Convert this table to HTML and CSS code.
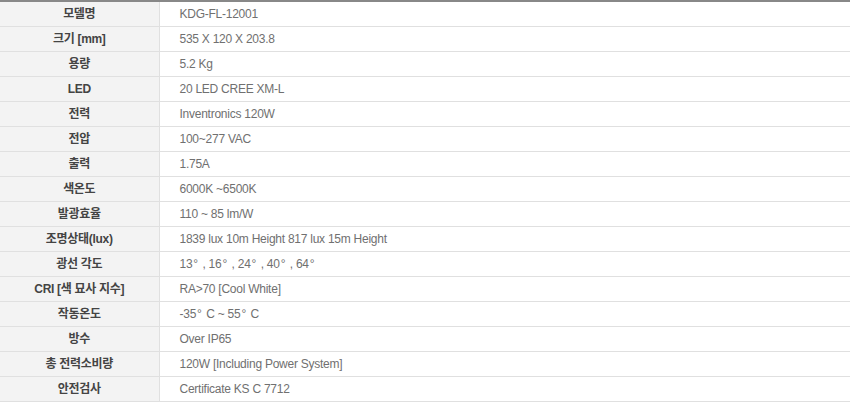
FILE: index.html
```html
<!DOCTYPE html>
<html lang="ko">
<head>
<meta charset="utf-8">
<link rel="stylesheet" href="styles.css">
</head>
<body>
<table class="spec">
<tbody>
<tr><th>모델명</th><td>KDG-FL-12001</td></tr>
<tr><th>크기 [mm]</th><td>535 X 120 X 203.8</td></tr>
<tr><th>용량</th><td>5.2 Kg</td></tr>
<tr><th>LED</th><td>20 LED CREE XM-L</td></tr>
<tr><th>전력</th><td>Inventronics 120W</td></tr>
<tr><th>전압</th><td>100~277 VAC</td></tr>
<tr><th>출력</th><td>1.75A</td></tr>
<tr><th>색온도</th><td>6000K ~6500K</td></tr>
<tr><th>발광효율</th><td>110 ~ 85 lm/W</td></tr>
<tr><th>조명상태(lux)</th><td>1839 lux 10m Height 817 lux 15m Height</td></tr>
<tr><th>광선 각도</th><td>13<span class="deg">°</span> , 16<span class="deg">°</span> , 24<span class="deg">°</span> , 40<span class="deg">°</span> , 64<span class="deg">°</span></td></tr>
<tr><th>CRI [색 묘사 지수]</th><td>RA&gt;70 [Cool White]</td></tr>
<tr><th>작동온도</th><td>-35<span class="deg">°</span> C ~ 55<span class="deg">°</span> C</td></tr>
<tr><th>방수</th><td>Over IP65</td></tr>
<tr><th>총 전력소비량</th><td>120W [Including Power System]</td></tr>
<tr><th>안전검사</th><td>Certificate KS C 7712</td></tr>
</tbody>
</table>
</body>
</html>
```
FILE: styles.css
```css
html, body {
  margin: 0;
  padding: 0;
  background: #fff;
}
.spec {
  width: 850px;
  border-collapse: collapse;
  border-top: 2px solid #888;
  font-family: "Liberation Sans", "Noto Sans CJK KR", sans-serif;
  font-size: 12px;
}
.spec th,
.spec td {
  height: 24px;
  padding: 0;
  border-bottom: 1px solid #e0e0e0;
  box-sizing: border-box;
  line-height: 24px;
}
.spec tr {
  height: 25px;
}
.spec th {
  width: 159px;
  background: #f3f3f3;
  border-right: 1px solid #e0e0e0;
  color: #444;
  font-weight: bold;
  letter-spacing: -0.3px;
  text-align: center;
}
.spec td {
  padding-left: 20px;
  color: #707070;
  letter-spacing: -0.25px;
  text-align: left;
}
.deg {
  display: inline-block;
  width: 6px;
  padding-left: 1px;
  text-align: left;
}
```
